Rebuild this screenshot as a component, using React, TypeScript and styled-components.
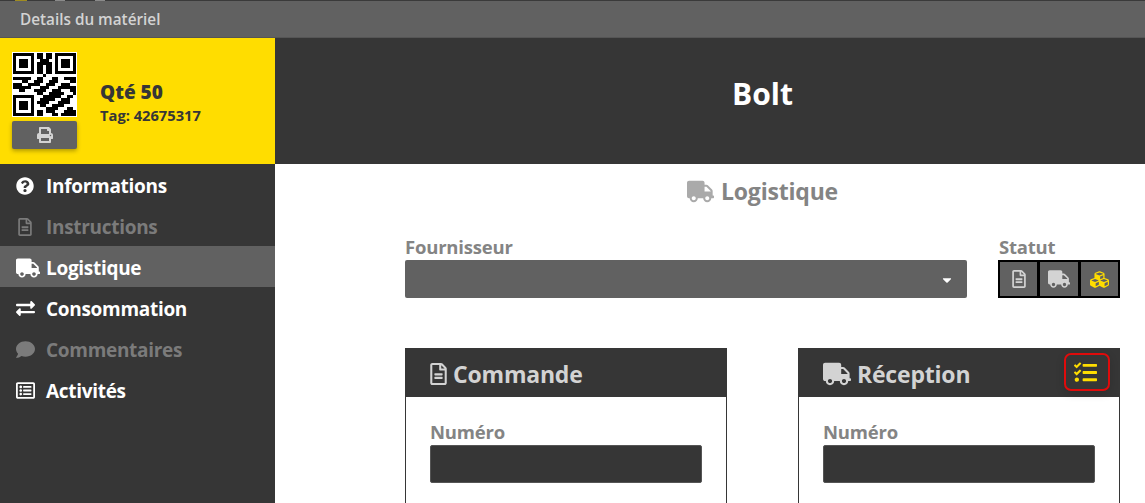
import React from 'react'
import styled, { createGlobalStyle } from 'styled-components'
import {
  FaCaretDown,
  FaCubes,
  FaExchangeAlt,
  FaComment,
  FaPrint,
  FaQuestionCircle,
  FaRegFileAlt,
  FaRegListAlt,
  FaTasks,
  FaTruck,
} from 'react-icons/fa'

const dark = '#363636'
const mid = '#616161'
const yellow = '#ffdd00'
const light = '#d3d3d3'
const grey = '#848484'

const GlobalStyle = createGlobalStyle`
  html, body {
    margin: 0;
    height: 100%;
    overflow: hidden;
    background: #fff;
  }
  body {
    font-family: "Open Sans", "Noto Sans", sans-serif;
  }
`

const Page = styled.div`
  width: 1145px;
  height: 503px;
  display: flex;
  flex-direction: column;
  overflow: hidden;
`

const PeekStrip = styled.div`
  height: 1px;
  flex: none;
  background: linear-gradient(
    to right,
    #3a3a3a 0 15px,
    #a08c20 15px 27px,
    #3a3a3a 27px 55px,
    #8a8a8a 55px 65px,
    #3a3a3a 65px 95px,
    #8a8a8a 95px 105px,
    #3a3a3a 105px
  );
`

const TitleBar = styled.header`
  height: 37px;
  flex: none;
  display: flex;
  align-items: center;
  padding-left: 20px;
  background: ${mid};
  border-bottom: 1px solid #555;
  box-sizing: border-box;
  color: ${light};
  font-size: 15.3px;
  font-weight: 600;
`

const Body = styled.div`
  flex: 1;
  display: flex;
  min-height: 0;
`

const Sidebar = styled.aside`
  width: 275px;
  flex: none;
  display: flex;
  flex-direction: column;
  background: ${dark};
`

const TagCard = styled.div`
  height: 126px;
  flex: none;
  display: flex;
  align-items: flex-start;
  gap: 23px;
  padding: 14px 0 0 12px;
  box-sizing: border-box;
  background: ${yellow};
  color: ${dark};
`

const QrColumn = styled.div`
  width: 65px;
  display: flex;
  flex-direction: column;
  gap: 4px;
`

const PrintButton = styled.button`
  width: 65px;
  height: 28px;
  display: flex;
  align-items: center;
  justify-content: center;
  padding: 0;
  border: none;
  border-radius: 2px;
  background: ${mid};
  color: ${light};
  box-shadow: 0 2px 4px rgba(0, 0, 0, 0.3);
`

const TagInfo = styled.div`
  display: flex;
  flex-direction: column;
  margin-top: 27px;
`

const Quantity = styled.div`
  font-size: 19px;
  line-height: 26px;
  font-weight: 800;
`

const TagNumber = styled.div`
  font-size: 14.7px;
  line-height: 20px;
  font-weight: 700;
`

const Nav = styled.nav`
  display: flex;
  flex-direction: column;
`

const NavItem = styled.div<{ $active?: boolean; $disabled?: boolean }>`
  height: 41px;
  box-sizing: border-box;
  display: flex;
  align-items: center;
  padding: 2px 0 0 16px;
  background: ${(p) => (p.$active ? mid : 'transparent')};
  color: ${(p) => (p.$disabled ? '#7b7b7b' : '#fff')};
  font-size: 19px;
  font-weight: 700;
  letter-spacing: -0.3px;
`

const NavIcon = styled.span`
  width: 30px;
  flex: none;
  display: flex;
  align-items: center;
  & > svg {
    display: block;
  }
`

const Main = styled.main`
  flex: 1;
  display: flex;
  flex-direction: column;
  min-width: 0;
`

const Banner = styled.div`
  height: 126px;
  flex: none;
  display: flex;
  align-items: center;
  justify-content: center;
  padding: 0 25px 16px 130px;
  box-sizing: border-box;
  background: ${dark};
  color: #fff;
  font-size: 30px;
  font-weight: 700;
`

const Content = styled.div`
  padding: 12px 25px 0 130px;
  display: flex;
  flex-direction: column;
`

const SectionTitle = styled.h2`
  margin: 0;
  height: 30px;
  display: flex;
  align-items: center;
  justify-content: center;
  gap: 7px;
  color: ${grey};
  font-size: 23px;
  font-weight: 700;
  letter-spacing: -0.2px;
`

const TruckGlyph = styled(FaTruck)`
  color: #aaa;
`

const FormRow = styled.div`
  display: flex;
  justify-content: space-between;
  margin-top: 30px;
`

const Field = styled.div<{ $width: number }>`
  width: ${(p) => p.$width}px;
  display: flex;
  flex-direction: column;
`

const Label = styled.label`
  height: 24px;
  color: ${grey};
  font-size: 18.5px;
  line-height: 22px;
  font-weight: 700;
  letter-spacing: -0.2px;
`

const StatusLabel = styled(Label)`
  padding-left: 1px;
`

const Select = styled.div`
  height: 38px;
  box-sizing: border-box;
  display: flex;
  align-items: center;
  justify-content: flex-end;
  padding: 2px 13px 0 0;
  border-radius: 2px;
  background: ${mid};
  color: #fff;
`

const StatusGroup = styled.div`
  height: 38px;
  box-sizing: border-box;
  display: grid;
  grid-template-columns: repeat(3, 1fr);
  gap: 3px;
  border: 2px solid #000;
  background: #000;
`

const StatusCell = styled.div<{ $active?: boolean }>`
  display: flex;
  align-items: center;
  justify-content: center;
  background: ${mid};
  color: ${(p) => (p.$active ? yellow : light)};
`

const Cards = styled.div`
  display: flex;
  justify-content: space-between;
  margin-top: 50px;
`

const Card = styled.section`
  width: 322px;
  display: flex;
  flex-direction: column;
`

const CardHeader = styled.div`
  height: 49px;
  box-sizing: border-box;
  display: flex;
  align-items: center;
  gap: 6px;
  padding: 2px 10px 0 25px;
  background: ${dark};
  color: ${light};
  font-size: 23px;
  font-weight: 700;
  letter-spacing: -0.2px;
`

const FileGlyph = styled(FaRegFileAlt)`
  width: 17px;
  height: 22px;
`

const CardTitle = styled.span`
  flex: 1;
`

const ChecklistButton = styled.button`
  width: 46px;
  height: 38px;
  margin-top: -3px;
  display: flex;
  align-items: center;
  justify-content: center;
  padding: 0 4px 0 0;
  box-sizing: border-box;
  border: 2px solid #e00b0b;
  border-radius: 7px;
  background: ${dark};
  color: ${yellow};
  box-shadow: 0 3px 8px rgba(0, 0, 0, 0.15);
`

const CardBody = styled.div`
  padding: 24px 24px 0;
  display: flex;
  flex-direction: column;
  border: 1px solid ${dark};
  border-top: none;
`

const TextInput = styled.div`
  height: 38px;
  margin-bottom: 15px;
  border-radius: 2px;
  border: 1px solid #555;
  box-sizing: border-box;
  background: ${dark};
`

const qrRows = [
  '111111101101101111111',
  '100000101101101000001',
  '101110100111001011101',
  '101110101111101011101',
  '101110101101101011101',
  '100000101101101000001',
  '111111101101101111111',
  '000000000010000000000',
  '111111001100011001111',
  '000110011100111000011',
  '111001111001110011100',
  '111111000111000111111',
  '001100011110011100011',
  '000000001100111110001',
  '111111100011111100110',
  '100000100111110011100',
  '101110101111000111100',
  '101110100110011110000',
  '101110100001111000110',
  '100000101101110001111',
  '111111101100011011111',
]

const QrCode = () => (
  <svg width="65" height="65" viewBox="-1 -1 65 65" shapeRendering="crispEdges" style={{ background: '#fff', display: 'block' }}>
    {qrRows.map((row, y) =>
      row.split('').map((cell, x) =>
        cell === '1' ? <rect key={`${x}-${y}`} x={x * 3} y={y * 3} width="3" height="3" fill="#000" /> : null
      )
    )}
  </svg>
)

const navItems = [
  { label: 'Informations', icon: <FaQuestionCircle size={18} /> },
  { label: 'Instructions', icon: <FaRegFileAlt size={18} />, disabled: true },
  { label: 'Logistique', icon: <FaTruck size={24} />, active: true },
  { label: 'Consommation', icon: <FaExchangeAlt size={19} /> },
  { label: 'Commentaires', icon: <FaComment size={19} />, disabled: true },
  { label: 'Activités', icon: <FaRegListAlt size={19} /> },
]

const OrderCard = ({ icon, title, action }: { icon: React.ReactNode; title: string; action?: React.ReactNode }) => (
  <Card>
    <CardHeader>
      {icon}
      <CardTitle>{title}</CardTitle>
      {action}
    </CardHeader>
    <CardBody>
      <Label>Numéro</Label>
      <TextInput />
      <Label>Date</Label>
      <TextInput />
    </CardBody>
  </Card>
)

const App = () => {
  return (
    <Page>
      <GlobalStyle />
      <PeekStrip />
      <TitleBar>Details du matériel</TitleBar>
      <Body>
        <Sidebar>
          <TagCard>
            <QrColumn>
              <QrCode />
              <PrintButton>
                <FaPrint size={16} />
              </PrintButton>
            </QrColumn>
            <TagInfo>
              <Quantity>Qté 50</Quantity>
              <TagNumber>Tag: 42675317</TagNumber>
            </TagInfo>
          </TagCard>
          <Nav>
            {navItems.map((item) => (
              <NavItem key={item.label} $active={item.active} $disabled={item.disabled}>
                <NavIcon>{item.icon}</NavIcon>
                {item.label}
              </NavItem>
            ))}
          </Nav>
        </Sidebar>
        <Main>
          <Banner>Bolt</Banner>
          <Content>
            <SectionTitle>
              <TruckGlyph size={27} />
              Logistique
            </SectionTitle>
            <FormRow>
              <Field $width={562}>
                <Label>Fournisseur</Label>
                <Select>
                  <FaCaretDown size={14} />
                </Select>
              </Field>
              <Field $width={122}>
                <StatusLabel>Statut</StatusLabel>
                <StatusGroup>
                  <StatusCell>
                    <FaRegFileAlt size={18} />
                  </StatusCell>
                  <StatusCell>
                    <FaTruck size={22} />
                  </StatusCell>
                  <StatusCell $active>
                    <FaCubes size={19} />
                  </StatusCell>
                </StatusGroup>
              </Field>
            </FormRow>
            <Cards>
              <OrderCard icon={<FileGlyph />} title="Commande" />
              <OrderCard
                icon={<FaTruck size={28} />}
                title="Réception"
                action={
                  <ChecklistButton>
                    <FaTasks size={23} />
                  </ChecklistButton>
                }
              />
            </Cards>
          </Content>
        </Main>
      </Body>
    </Page>
  )
}

export default App
